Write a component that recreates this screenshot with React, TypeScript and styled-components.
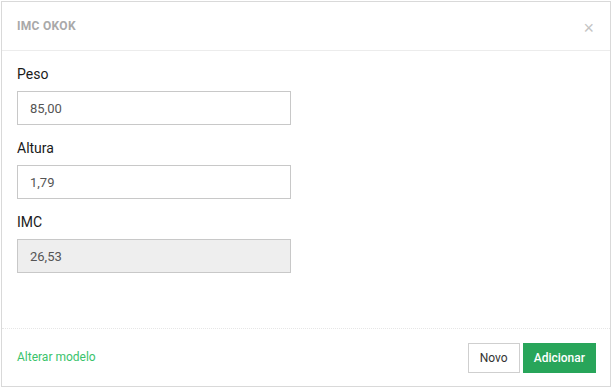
import styled, { createGlobalStyle } from "styled-components";

const Global = createGlobalStyle`
  html, body { margin: 0; padding: 0; background: #fff; }
  body { font-family: Roboto, "Liberation Sans", sans-serif; }
  * { box-sizing: border-box; }
`;

const Page = styled.div`
  width: 612px;
  height: 389px;
  padding: 1px 1px 2px 1px;
`;

const Modal = styled.div`
  width: 100%;
  height: 100%;
  border: 1px solid #d9d9d9;
  display: flex;
  flex-direction: column;
  background: #fff;
`;

const Header = styled.div`
  height: 49px;
  flex: none;
  display: flex;
  align-items: center;
  justify-content: space-between;
  padding: 0 16px 0 15px;
  border-bottom: 1px solid #ececec;
`;

const Title = styled.h4`
  margin: 0;
  font-size: 12px;
  font-weight: 700;
  letter-spacing: 0.3px;
  color: #a9a9a9;
  text-transform: uppercase;
`;

const Close = styled.button`
  border: 0;
  background: none;
  padding: 0;
  font-size: 18px;
  line-height: 1;
  color: #c4c4c4;
  font-family: "Liberation Sans", sans-serif;
  margin-top: 3px;
`;

const Body = styled.div`
  flex: 1;
  padding: 15px 15px 0 15px;
  display: flex;
  flex-direction: column;
`;

const Field = styled.div`
  display: flex;
  flex-direction: column;
  margin-bottom: 15px;
`;

const Label = styled.label`
  font-size: 14px;
  font-weight: 400;
  color: #1a1a1a;
  line-height: 17px;
  margin-bottom: 8px;
`;

const Input = styled.input<{ $readonly?: boolean }>`
  width: 274px;
  height: 34px;
  border: 1px solid #c8c8c8;
  background: ${(p) => (p.$readonly ? "#eeeeee" : "#fff")};
  padding: 0 12px;
  font-family: Roboto, "Liberation Sans", sans-serif;
  font-size: 13px;
  color: #555;
  outline: none;
`;

const Footer = styled.div`
  height: 58px;
  flex: none;
  border-top: 1px dotted #e6e6e6;
  display: flex;
  align-items: center;
  justify-content: space-between;
  padding: 0 14px 0 15px;
`;

const Link = styled.a`
  font-size: 12px;
  color: #3ac36b;
  text-decoration: none;
  margin-top: -1px;
`;

const Actions = styled.div`
  display: flex;
  gap: 3px;
`;

const Button = styled.button<{ $primary?: boolean }>`
  height: 30px;
  padding: 0 ${(p) => (p.$primary ? "10px" : "11px")};
  font-family: Roboto, "Liberation Sans", sans-serif;
  font-size: 12px;
  font-weight: ${(p) => (p.$primary ? 500 : 400)};
  border: 1px solid ${(p) => (p.$primary ? "#28a55a" : "#cfcfcf")};
  background: ${(p) => (p.$primary ? "#28a55a" : "#fff")};
  color: ${(p) => (p.$primary ? "#fff" : "#333")};
`;

export default function App() {
  return (
    <>
      <Global />
      <Page>
        <Modal>
          <Header>
            <Title>IMC OKOK</Title>
            <Close>×</Close>
          </Header>
          <Body>
            <Field>
              <Label>Peso</Label>
              <Input defaultValue="85,00" />
            </Field>
            <Field>
              <Label>Altura</Label>
              <Input defaultValue="1,79" />
            </Field>
            <Field>
              <Label>IMC</Label>
              <Input $readonly readOnly defaultValue="26,53" />
            </Field>
          </Body>
          <Footer>
            <Link href="#">Alterar modelo</Link>
            <Actions>
              <Button>Novo</Button>
              <Button $primary>Adicionar</Button>
            </Actions>
          </Footer>
        </Modal>
      </Page>
    </>
  );
}
